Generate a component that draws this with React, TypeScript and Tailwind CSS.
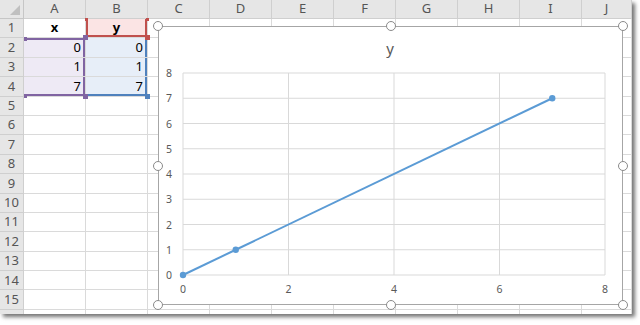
import React from 'react'

const COLS = ['A', 'B', 'C', 'D', 'E', 'F', 'G', 'H', 'I', 'J']
const ROWS = Array.from({ length: 16 }, (_, i) => i + 1)

type Cell = {
  text: string
  bold?: boolean
  align: 'center' | 'right'
  look: string
  marks?: string[]
}

// chart source ranges: series name (red), x values (purple), y values (blue)
const cellData: Record<string, Cell> = {
  A1: { text: 'x', bold: true, align: 'center', look: 'bg-white' },
  B1: {
    text: 'y',
    bold: true,
    align: 'center',
    look: 'bg-[#fbe4e4] shadow-[inset_2px_0_#c0504d,inset_-2px_0_#c0504d,inset_0_-2px_#c0504d]',
    marks: ['-left-[1px] -top-[1px] w-[3px] h-[3px] bg-[#c0504d]', '-right-[2px] -top-[1px] w-[3px] h-[3px] bg-[#c0504d]', '-right-[3px] -bottom-[3px] w-[5px] h-[5px] bg-[#c0504d]'],
  },
  A2: {
    text: '0',
    align: 'right',
    look: 'bg-[#eeeaf5] shadow-[inset_0_2px_#8064a2,inset_-2px_0_#8064a2]',
    marks: ['left-0 -top-[1px] w-[3px] h-[4px] bg-[#8064a2]', '-right-[3px] -top-[3px] w-[5px] h-[5px] bg-[#8064a2]'],
  },
  A3: { text: '1', align: 'right', look: 'bg-[#eeeaf5] shadow-[inset_-2px_0_#8064a2]' },
  A4: {
    text: '7',
    align: 'right',
    look: 'bg-[#eeeaf5] shadow-[inset_0_-2px_#8064a2,inset_-2px_0_#8064a2]',
    marks: ['left-0 -bottom-[2px] w-[3px] h-[4px] bg-[#8064a2]', '-right-[3px] -bottom-[3px] w-[5px] h-[5px] bg-[#8064a2]'],
  },
  B2: { text: '0', align: 'right', look: 'bg-[#e7eef8] shadow-[inset_-2px_0_#4f81bd]' },
  B3: { text: '1', align: 'right', look: 'bg-[#e7eef8] shadow-[inset_-2px_0_#4f81bd]' },
  B4: {
    text: '7',
    align: 'right',
    look: 'bg-[#e7eef8] shadow-[inset_-2px_0_#4f81bd,inset_0_-2px_#4f81bd]',
    marks: ['-right-[3px] -bottom-[3px] w-[5px] h-[5px] bg-[#4f81bd]'],
  },
}

// plot area in chart coordinates
const PL = 24
const PR = 446
const PT = 46
const PB = 248
const sx = (v: number) => PL + (v * (PR - PL)) / 8
const sy = (v: number) => PB - (v * (PB - PT)) / 8
const points = [
  [0, 0],
  [1, 1],
  [7, 7],
]

const Handle = ({ className }: { className: string }) => (
  <div
    className={`absolute w-[10px] h-[10px] rounded-full bg-white border-[1.5px] border-[#8a8a8a] -translate-x-1/2 -translate-y-1/2 ${className}`}
  />
)

const Chart = () => (
  <div className="absolute left-[158px] top-[26px] w-[465px] h-[279px]">
    <div className="w-full h-full bg-white border border-[#a6a6a6]">
      <svg width="463" height="277" viewBox="0 0 463 277" className="block">
        <text x="231" y="27" textAnchor="middle" fontSize="15" fill="#595959" fontFamily="'Noto Sans', sans-serif">
          y
        </text>
        {[0, 1, 2, 3, 4, 5, 6, 7, 8].map((v) => (
          <g key={`y${v}`}>
            <line x1={PL} x2={PR} y1={sy(v)} y2={sy(v)} stroke="#d9d9d9" strokeWidth="1" />
            <text x="10" y={sy(v) + 4} textAnchor="middle" fontSize="10.5" fill="#595959" fontFamily="'Noto Sans', sans-serif">
              {v}
            </text>
          </g>
        ))}
        {[0, 2, 4, 6, 8].map((v) => (
          <g key={`x${v}`}>
            <line x1={sx(v)} x2={sx(v)} y1={PT} y2={PB} stroke="#d9d9d9" strokeWidth="1" />
            <text x={sx(v)} y="266" textAnchor="middle" fontSize="10.5" fill="#595959" fontFamily="'Noto Sans', sans-serif">
              {v}
            </text>
          </g>
        ))}
        <polyline
          points={points.map(([x, y]) => `${sx(x)},${sy(y)}`).join(' ')}
          fill="none"
          stroke="#5b9bd5"
          strokeWidth="2"
        />
        {points.map(([x, y]) => (
          <circle key={`${x}-${y}`} cx={sx(x)} cy={sy(y)} r="3.2" fill="#5b9bd5" />
        ))}
      </svg>
    </div>
    <Handle className="left-0 top-0" />
    <Handle className="left-1/2 top-0" />
    <Handle className="left-full top-0" />
    <Handle className="left-0 top-1/2" />
    <Handle className="left-full top-1/2" />
    <Handle className="left-0 top-full" />
    <Handle className="left-1/2 top-full" />
    <Handle className="left-full top-full" />
  </div>
)

export default function App() {
  return (
    <div className="w-[640px] h-[325px] bg-white font-['Noto_Sans',sans-serif]">
      <div className="relative w-[632px] h-[314px] overflow-hidden shadow-[3px_3px_4px_rgba(0,0,0,0.55)]">
        <div className="grid grid-cols-[24px_repeat(9,62px)_50px] grid-rows-[19px_repeat(16,19.4px)]">
          <div className="relative bg-[#e6e6e6] border-r border-b border-[#c6c6c6]">
            <div className="absolute right-[3px] bottom-[3px] w-0 h-0 border-l-[10px] border-l-transparent border-b-[10px] border-b-[#c0c0c0]" />
          </div>
          {COLS.map((c) => (
            <div
              key={c}
              className="bg-[#e6e6e6] border-r border-b border-[#cfcfcf] flex items-center justify-center text-[13px] text-[#555]"
            >
              {c}
            </div>
          ))}
          {ROWS.map((r) => (
            <React.Fragment key={r}>
              <div className="bg-[#e6e6e6] border-r border-b border-[#cfcfcf] flex items-center justify-center text-[13px] text-[#555]">
                {r < 16 ? r : ''}
              </div>
              {COLS.map((c) => {
                const d = cellData[`${c}${r}`]
                return (
                  <div
                    key={c}
                    className={`relative border-r border-b border-[#dadada] flex items-center px-1 text-[13px] text-black ${
                      d?.look ?? 'bg-white'
                    } ${d?.align === 'right' ? 'justify-end' : 'justify-center'} ${d?.bold ? 'font-bold' : ''}`}
                  >
                    {d?.text}
                    {d?.marks?.map((m) => (
                      <span key={m} className={`absolute z-10 ${m}`} />
                    ))}
                  </div>
                )
              })}
            </React.Fragment>
          ))}
        </div>

        <Chart />
      </div>
    </div>
  )
}
